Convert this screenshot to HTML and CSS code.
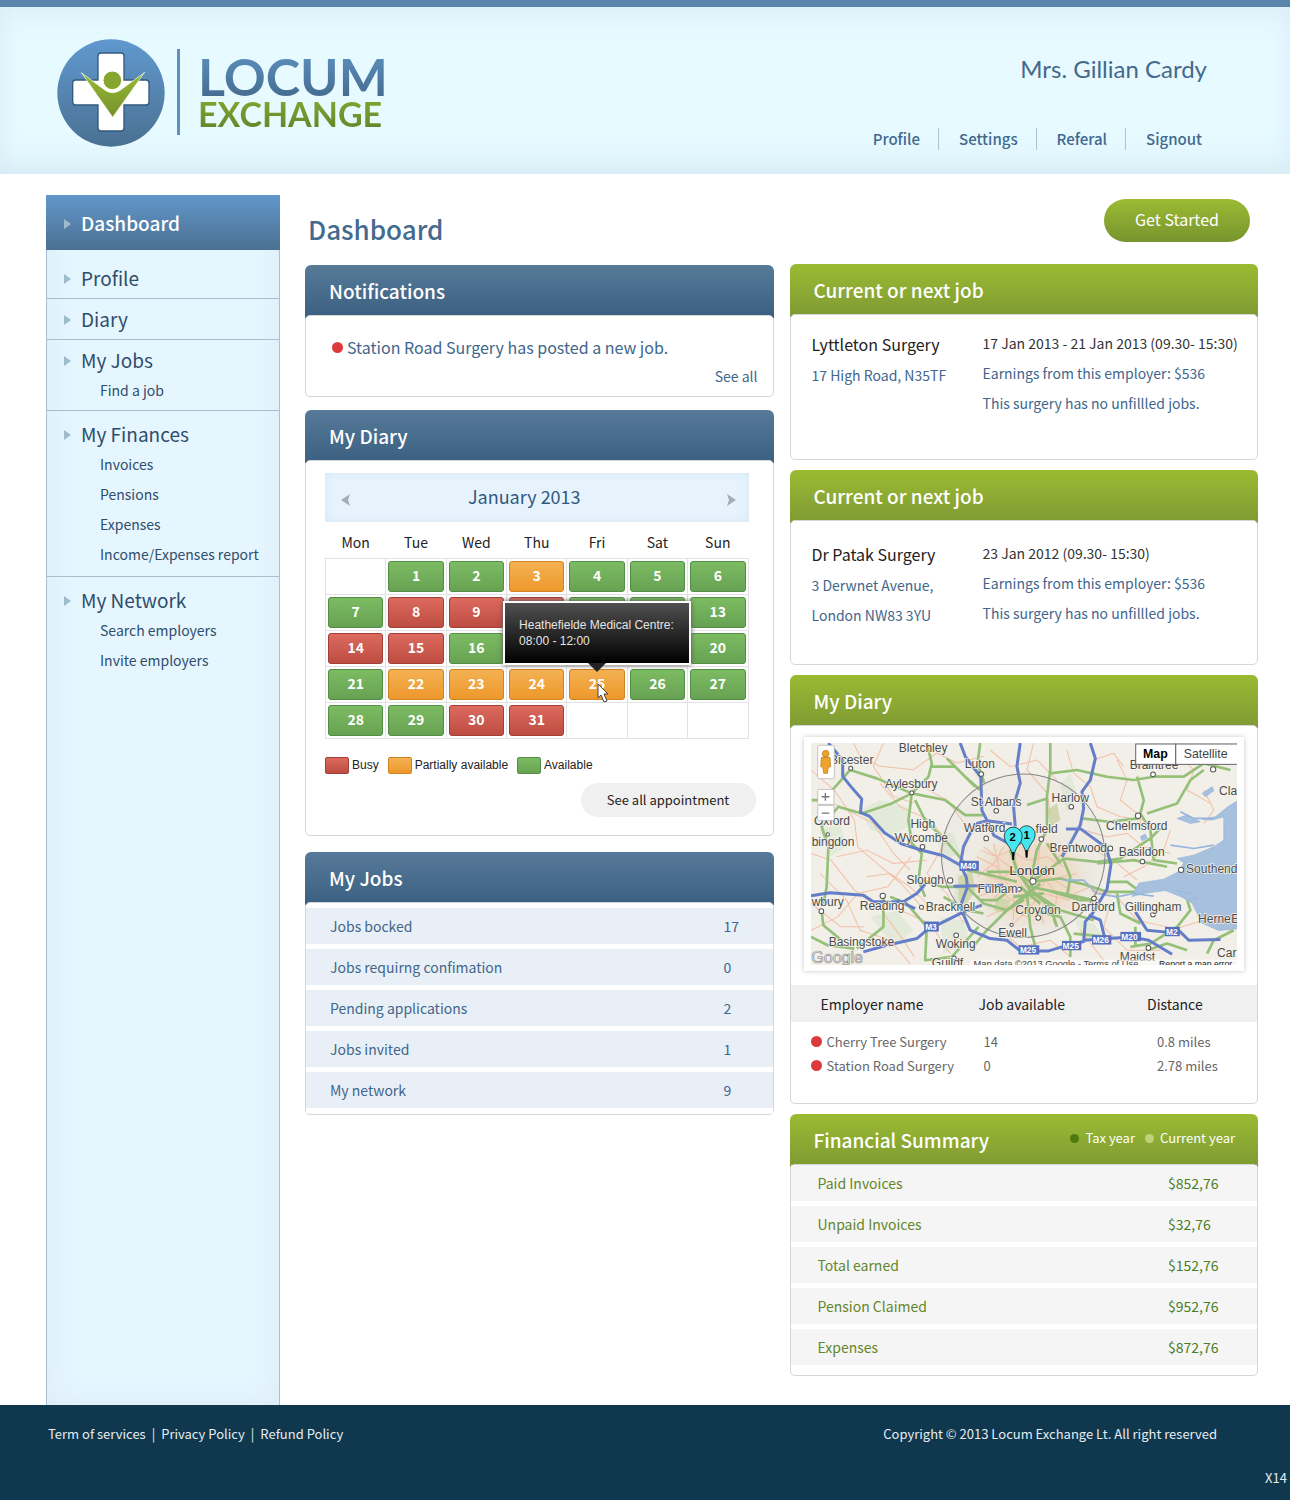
FILE: index.html
```html
<!DOCTYPE html>
<html lang="en">
<head>
<meta charset="utf-8">
<title>Locum Exchange - Dashboard</title>
<link rel="stylesheet" href="styles.css">
</head>
<body>
<header class="top">
  <a class="brand" href="#">
    <svg class="brand-mark" viewBox="0 0 324 324" width="108" height="108" aria-hidden="true">
      <defs>
        <linearGradient id="disc" x1="0" y1="0" x2="0" y2="1"><stop offset="0" stop-color="#6099cf"/><stop offset="1" stop-color="#4a7092"/></linearGradient>
        <linearGradient id="leaf" x1="0" y1="0" x2="0" y2="1"><stop offset="0" stop-color="#9aba32"/><stop offset="1" stop-color="#74922c"/></linearGradient>
      </defs>
      <circle cx="162" cy="162" r="161" fill="url(#disc)"/>
      <path d="M132 42h60q9 0 9 9v72h66q9 0 9 9v57q0 9-9 9h-66v69q0 9-9 9h-60q-9 0-9-9v-69H56q-9 0-9-9v-57q0-9 9-9h67V51q0-9 9-9z" fill="#fff" stroke="#34597b" stroke-width="4"/>
      <path d="M73 101l65 48q29 24 58 0l67-49-96 135z" fill="url(#leaf)" stroke="#fff" stroke-width="2"/>
      <circle cx="166" cy="124" r="28" fill="#86a62f" stroke="#fff" stroke-width="3"/>
    </svg>
    <span class="brand-text"><span class="brand-a">LOCUM</span><span class="brand-b">EXCHANGE</span></span>
  </a>
  <div class="account">
    <div class="user">Mrs. Gillian Cardy</div>
    <nav class="links"><a href="#">Profile</a><a href="#">Settings</a><a href="#">Referal</a><a href="#">Signout</a></nav>
  </div>
</header>

<div class="page">
  <nav class="side">
    <a class="side-active" href="#">Dashboard</a>
    <div class="group first"><a class="main" href="#">Profile</a></div>
    <div class="group"><a class="main" href="#">Diary</a></div>
    <div class="group"><a class="main" href="#">My Jobs</a><a class="sub" href="#">Find a job</a></div>
    <div class="group roomy"><a class="main" href="#">My Finances</a><a class="sub" href="#">Invoices</a><a class="sub" href="#">Pensions</a><a class="sub" href="#">Expenses</a><a class="sub" href="#">Income/Expenses report</a></div>
    <div class="group roomy last"><a class="main" href="#">My Network</a><a class="sub" href="#">Search employers</a><a class="sub" href="#">Invite employers</a></div>
  </nav>

  <main class="content">
    <div class="title-row"><h1>Dashboard</h1><button class="start" type="button">Get Started</button></div>
    <div class="columns">
      <div class="col col-left">
        <section class="card blue">
          <h2>Notifications</h2>
          <div class="body notes">
            <p class="note"><span class="dot"></span>Station Road Surgery has posted a new job.</p>
            <a class="see" href="#">See all</a>
          </div>
        </section>

        <section class="card blue">
          <h2>My Diary</h2>
          <div class="body diary">
            <div class="month">
              <button type="button" aria-label="Previous month"><svg width="9" height="12" viewBox="0 0 9 12"><path d="M9 0L0 6l9 6-2-6z" fill="#a3adb5"/></svg></button>
              <span>January 2013</span>
              <button type="button" aria-label="Next month"><svg width="9" height="12" viewBox="0 0 9 12"><path d="M0 0l9 6-9 6 2-6z" fill="#a3adb5"/></svg></button>
            </div>
            <table class="cal">
              <thead><tr><th>Mon</th><th>Tue</th><th>Wed</th><th>Thu</th><th>Fri</th><th>Sat</th><th>Sun</th></tr></thead>
              <tbody>
                <tr><td></td><td><button class="day free">1</button></td><td><button class="day free">2</button></td><td><button class="day part">3</button></td><td><button class="day free">4</button></td><td><button class="day free">5</button></td><td><button class="day free">6</button></td></tr>
                <tr><td><button class="day free">7</button></td><td><button class="day busy">8</button></td><td><button class="day busy">9</button></td><td><button class="day busy" aria-label="10"></button></td><td><button class="day free" aria-label="11"></button></td><td><button class="day free" aria-label="12"></button></td><td><button class="day free">13</button></td></tr>
                <tr><td><button class="day busy">14</button></td><td><button class="day busy">15</button></td><td><button class="day free">16</button></td><td><button class="day free" aria-label="17"></button></td><td><button class="day free" aria-label="18"></button></td><td><button class="day free" aria-label="19"></button></td><td><button class="day free">20</button></td></tr>
                <tr><td><button class="day free">21</button></td><td><button class="day part">22</button></td><td><button class="day part">23</button></td><td><button class="day part">24</button></td><td class="hovered"><button class="day part">25</button>
                  <div class="tip" role="tooltip">Heathefielde Medical Centre:<br>08:00 - 12:00</div>
                  <svg class="pointer" width="12" height="20" viewBox="0 0 12 20" aria-hidden="true"><path d="M1 1v14l3-3 3 7 3-1-3-7h4z" fill="#fff" stroke="#444" stroke-width="1"/></svg>
                </td><td><button class="day free">26</button></td><td><button class="day free">27</button></td></tr>
                <tr><td><button class="day free">28</button></td><td><button class="day free">29</button></td><td><button class="day busy">30</button></td><td><button class="day busy">31</button></td><td></td><td></td><td></td></tr>
              </tbody>
            </table>
            <div class="legend"><span><i class="swatch busy"></i>Busy</span><span><i class="swatch part"></i>Partially available</span><span><i class="swatch free"></i>Available</span></div>
            <button class="all" type="button">See all appointment</button>
          </div>
        </section>

        <section class="card blue jobs">
          <h2>My Jobs</h2>
          <div class="body">
            <table class="rows">
              <tr><th scope="row">Jobs bocked</th><td>17</td></tr>
              <tr><th scope="row">Jobs requirng confimation</th><td>0</td></tr>
              <tr><th scope="row">Pending applications</th><td>2</td></tr>
              <tr><th scope="row">Jobs invited</th><td>1</td></tr>
              <tr><th scope="row">My network</th><td>9</td></tr>
            </table>
          </div>
        </section>
      </div>

      <div class="col col-right">
        <section class="card green">
          <h2>Current or next job</h2>
          <div class="body job">
            <div><p class="place">Lyttleton Surgery</p><p>17 High Road, N35TF</p></div>
            <div><p class="when">17 Jan 2013 - 21 Jan 2013 (09.30- 15:30)</p><p>Earnings from this employer: $536</p><p>This surgery has no unfillled jobs.</p></div>
          </div>
        </section>
        <section class="card green">
          <h2>Current or next job</h2>
          <div class="body job lower">
            <div><p class="place">Dr Patak Surgery</p><p>3 Derwnet Avenue,</p><p>London NW83 3YU</p></div>
            <div><p class="when">23 Jan 2012 (09.30- 15:30)</p><p>Earnings from this employer: $536</p><p>This surgery has no unfillled jobs.</p></div>
          </div>
        </section>

        <section class="card green">
          <h2>My Diary</h2>
          <div class="body nearby">
            <div class="map-frame">
              <svg class="map" viewBox="0 0 1278 666" role="img" aria-label="Map of London and surroundings">
                <defs>
                  <radialGradient id="town"><stop offset="0" stop-color="#f0d9bd"/><stop offset=".6" stop-color="#f0e1cd"/><stop offset="1" stop-color="#f1eee6" stop-opacity="0"/></radialGradient>
                </defs>
                <rect width="1278" height="666" fill="#f1efe8"/>
                <g transform="translate(-33 -39)">
                  <g fill="#e4eada">
                    <path d="M180 240l60-30 80 20 20 50-70 40-60-20zM400 300l60 10 20 60-50 20zM210 560l80-20 50 60-60 50zM420 560l70 10 20 70-80 30zM60 300l60-20 20 70-50 30zM470 430l40 20-10 100-40-30zM780 160l30-30 20 60-30 60zM820 560l60 20 30 40-60 20zM500 90l60 40-20 30z"/>
                  </g>
                  <ellipse cx="690" cy="450" rx="215" ry="175" fill="url(#town)"/>
                  <g fill="#d3d9ac"><path d="M475 440l40-20 10 60-30 50-20-20zM740 240l30-20 10 50-30 20zM590 500l40 10-10 40-40-10z"/></g>
                  <g fill="none" stroke="#f4bfa6" stroke-width="3" stroke-linejoin="round">
                    <path d="M160 39l20 40 60 30 100 10 70-50 60 30 80-20M33 120l70 60 60 90 10 80 70 60 60 50 70 80M33 370l60 20 70 90 80 60 60 80 40 60M100 220l120 60 60 90 50 50M240 160l60 70 90 40 70 90M33 600l80-40 60-70 90-20 70-90M250 39l-30 70 60 90 60 20M60 430l80 80 40 90 90 30 60 70M300 540l90 40 60 90M350 160l90 50 60 80M570 60l60 50 80-20 60 60M440 330l-60 100 60 60 50 90M33 520l90 70 70 0M110 380l90-20 80 40 100-10M200 440l70-10 60 40 50 50 60 10"/>
                    <path d="M700 39l-20 80 60 70 10 60M800 60l20 70 50 40 20 60 70 30 70 10M950 90l30 60-20 60 50 40 20 50M850 300l70 20 60-10 50 40 80 20M1120 60l60 60-20 60 70 40M1110 300l-20 60-60 50-60 30M870 480l80 20 60 70 90 20 70 40M930 520l-20 70 70 70 100 0M1110 600l100-30 80 30M840 600l70 90M600 600l60 50 90-20 60 50M1210 180l30 60-30 40M880 90l60-20 30 40M880 360l60 30 70 60"/>
                    <path d="M540 360l50 20 40-20 50 30 60-10 50 30M520 420l70 30 60-30 90 30 90-20M530 500l60-20 60 40 80-30 80 20M560 560l60-30 60 30 60-40M580 340l20 90 40 60 0 80M640 330l10 90 60 70 20 90M720 340l-10 80 60 70-10 90M790 360l-50 80-40 80-60 60M550 350l80 60 100 20 80 50M610 350l-30 50-50 40M530 380l60 30 20 60-40 50M820 450l50 20 30 50M800 500l70-30 50 20"/>
                  </g>
                  <g fill="none" stroke="#95c078" stroke-width="8" stroke-linejoin="round">
                    <path d="M150 120l80 25 105 45 50-50 10-40-15-61M150 120l-80 90-35 0M335 190l-60 30-90 30-70-20-50 60 20 60-5 120-10 50M335 190l100 20 60 45 60 0M335 190l-10 80 10 70 30 30-10 80 20 50M345 210l30 60 60 60 60 70M395 110l70 0 60 60M440 85l60 60 40 35M250 500l0 90-80 65M270 500l50 20 60 70-5 100 80-10 80-90M65 545l5 40 60 50M500 420l70 15 80 20M540 39l-8 60 20 60M33 620l50 25 80 10M500 470l50 50 70 20 50-30M365 450l60 20 70 0M430 500l70 40 50 10"/>
                    <path d="M750 39l0 80 -10 80 0 100-30 60-20 100M750 130l80-10 90 20 80 10 60-10 90 0 60-40 80 20M740 205l-60 20M1010 140l20 70-10 40 30 50 10 90 70 10M1040 250l90-30 40-70 40-30M845 265l80 10 90-10M690 455l60-40 40-30 100 10 70-10 90-60 30-30M890 400l110-10 100 20M690 455l90-10 80 20 60 20 100 0-40-30-60 0M690 470l100 20 90 20M690 480l-70 60-60 60-50 60M680 490l10 100 20 80M690 480l90 60 100 30M880 510l-40 0-100-30M700 540l80 20 30 60 0 60M950 490l10 60 60 30M1160 510l10 30-40 50-80 50-60 10M1300 600l-60 30-20 40M1005 590l0 60M640 470l-50 40-50 0M690 455l-50-30-80 0M780 400l-40-60M790 390l20 50-10 60M920 620l-100-10M1040 660l60-20 60 20"/>
                    <path d="M690 480l-40-60-20-60M690 480l60 50 20 60M650 520l70-60M660 470l60 50M640 500l90-10M690 470l50-60" stroke-width="9"/>
                  </g>
                  <g fill="#a7c0dd" stroke="#93b4da" stroke-width="2">
                    <path d="M1315 210l-30 18-40 32-40 8 30 2 35-10 0 70-30 20-60 25-50 10 20 12-10 25-50 25-75 12-20 40 40-10 60-8 50 20 30 18 30 60 50 22 60-6z"/>
                    <path d="M1130 265l30-10 40 20-30 5zM1205 190l30-20 5 12-25 18zM1020 320l15-8 5 12-15 8zM1130 480l40 10 20 15-30 5z"/>
                  </g>
                  <path d="M790 450l60 0 40 40 60 10 50-10 60 8M1240 265l-60 0-40-20M1240 345l-60 10-70-10" fill="none" stroke="#94b6dc" stroke-width="5"/>
                  <g fill="none" stroke="#647dc8" stroke-width="9" stroke-linejoin="round">
                    <path d="M85 39l25 30 18 22 0 48 24 30 33 38-4 40 28 12 45 50 50 32 56 18 70 18 50 28 18 35 4 30-22 60 30 70 60 25 50 5 40 32 85 0 50-15 55-13 5-60 20-22 45-75 12-75-15-50-75-55-45 0M480 405l10-55 20-40 20-30 30-8 75 10M480 39l16 42 46 60 3 100 18 35 18 40 40 22 40 2M660 39l-10 70 10 50-20 70 5 60M870 39l15 46-15 65-25 35 5 50-10 50-30 55-25 40M33 497l57-9 100 7 30 20 90 0 40-25 25-28M290 510l55 25M460 468l150-3M190 665l70-20 90-20 30-25 50-25 60-30 55-20M1005 545l35 55 50 5 45-5 30 30 95-2M850 630l140-10 55 10 70 42M865 555l35 15 15 60"/>
                  </g>
                  <circle cx="669" cy="377" r="245" fill="#bbb" fill-opacity=".07" stroke="#858585" stroke-width="3"/>
                  <g class="shield"><rect x="478" y="392" width="58" height="30"/><rect x="372" y="574" width="44" height="30"/><rect x="655" y="645" width="62" height="28"/><rect x="785" y="632" width="58" height="28"/><rect x="875" y="615" width="58" height="28"/><rect x="960" y="605" width="62" height="28"/><rect x="1094" y="590" width="44" height="28"/>
                    <text x="480" y="416">M40</text><text x="375" y="598">M3</text><text x="659" y="668">M25</text><text x="787" y="655">M25</text><text x="877" y="638">M26</text><text x="963" y="628">M20</text><text x="1097" y="613">M2</text></g>
                  <g fill="#fff" stroke="#555" stroke-width="3"><circle cx="152" cy="115" r="6"/><circle cx="335" cy="188" r="6"/><circle cx="543" cy="132" r="7"/><circle cx="588" cy="242" r="7"/><circle cx="558" cy="325" r="7"/><circle cx="367" cy="350" r="7"/><circle cx="83" cy="313" r="5"/><circle cx="450" cy="451" r="8"/><circle cx="248" cy="497" r="8"/><circle cx="364" cy="531" r="6"/><circle cx="64" cy="543" r="7"/><circle cx="468" cy="615" r="7"/><circle cx="462" cy="683" r="6"/><circle cx="657" cy="477" r="6"/><circle cx="634" cy="584" r="5"/><circle cx="698" cy="453" r="9"/><circle cx="813" cy="230" r="7"/><circle cx="723" cy="327" r="7"/><circle cx="930" cy="355" r="7"/><circle cx="1058" cy="133" r="7"/><circle cx="1238" cy="118" r="8"/><circle cx="1013" cy="257" r="8"/><circle cx="1026" cy="394" r="7"/><circle cx="1142" cy="419" r="8"/><circle cx="881" cy="505" r="7"/><circle cx="714" cy="563" r="7"/><circle cx="1058" cy="553" r="7"/><circle cx="1044" cy="653" r="7"/></g>
                  <g class="towns">
                    <text x="296" y="66">Bletchley</text><text x="90" y="103">Bicester</text><text x="494" y="115">Luton</text><text x="255" y="174">Aylesbury</text><text x="512" y="228">St Albans</text><text x="42" y="284">Oxford</text><text x="331" y="294">High</text><text x="284" y="335">Wycombe</text><text x="491" y="307">Watford</text><text x="35" y="348">bingdon</text><text x="319" y="462">Slough</text><text x="35" y="528">wbury</text><text x="179" y="538">Reading</text><text x="377" y="541">Bracknell</text><text x="86" y="647">Basingstoke</text><text x="407" y="653">Woking</text><text x="594" y="619">Ewell</text><text x="395" y="711">Guildf</text><text x="532" y="487">Fulham</text>
                    <text x="754" y="215">Harlow</text><text x="706" y="310">field</text><text x="748" y="366">Brentwood</text><text x="988" y="118">Braintree</text><text x="917" y="300">Chelmsford</text><text x="955" y="378">Basildon</text><text x="1157" y="430">Southend</text><text x="1256" y="195">Cla</text><text x="645" y="551">Croydon</text><text x="814" y="542">Dartford</text><text x="973" y="542">Gillingham</text><text x="1193" y="579">Herne</text><text x="1292" y="579">E</text><text x="958" y="693">Maidst</text><text x="1250" y="680">Car</text><text class="city" x="627" y="434">London</text>
                  </g>
                  <text class="google" x="34" y="697">Google</text>
                  <rect x="510" y="688" width="801" height="20" fill="#fff" fill-opacity=".6"/>
                  <text class="credit" x="520" y="711">Map data ©2013 Google - Terms of Use</text><text class="credit credit-strong" x="1076" y="711">Report a map error</text>
                  <g stroke="#000" stroke-width="2" fill="#45e6ef"><path d="M679 382q-2-26-16-44-10-12-10-24a26 27 0 0 1 52 0q0 12-10 24-14 18-16 44z"/><path d="M639 389q-2-26-16-44-11-12-11-26a27 28 0 0 1 54 0q0 14-11 26-14 18-16 44z"/></g>
                  <path d="M679 360v22M639 366v23" stroke="#000" stroke-width="6"/>
                  <g class="pin"><text x="670" y="328">1</text><text x="628" y="334">2</text></g>
                  <g fill="#fff" stroke="#aaa" stroke-width="2"><rect x="53" y="46" width="50" height="100" rx="5"/><rect x="53" y="178" width="49" height="45" rx="3"/><rect x="53" y="226" width="49" height="45" rx="3"/></g>
                  <path d="M65 200h23M76 189v23M65 249h23" stroke="#777" stroke-width="4"/>
                  <g fill="#eda32b" stroke="#b87414" stroke-width="2"><path d="M64 82h26l2 28-7 2-3 18H71l-3-18-6-2z"/><circle cx="77" cy="71" r="10"/></g>
                  <g fill="#fff" stroke="#666" stroke-width="3"><rect x="1006" y="42" width="120" height="61"/><rect x="1126" y="42" width="190" height="61"/></g>
                  <text class="map-on" x="1028" y="85">Map</text><text class="map-off" x="1150" y="85">Satellite</text>
                </g>
              </svg>
            </div>
            <table class="employers">
              <thead><tr><th>Employer name</th><th>Job available</th><th>Distance</th></tr></thead>
              <tbody>
                <tr><td><span class="dot"></span>Cherry Tree Surgery</td><td>14</td><td>0.8 miles</td></tr>
                <tr><td><span class="dot"></span>Station Road Surgery</td><td>0</td><td>2.78 miles</td></tr>
              </tbody>
            </table>
          </div>
        </section>

        <section class="card green finance">
          <div class="head"><h2>Financial Summary</h2><p class="years"><span class="tax">Tax year</span><span class="current">Current year</span></p></div>
          <div class="body">
            <table class="rows">
              <tr><th scope="row">Paid Invoices</th><td>$852,76</td></tr>
              <tr><th scope="row">Unpaid Invoices</th><td>$32,76</td></tr>
              <tr><th scope="row">Total earned</th><td>$152,76</td></tr>
              <tr><th scope="row">Pension Claimed</th><td>$952,76</td></tr>
              <tr><th scope="row">Expenses</th><td>$872,76</td></tr>
            </table>
          </div>
        </section>
      </div>
    </div>
  </main>
</div>

<footer class="foot">
  <div class="foot-row">
    <nav class="terms"><a href="#">Term of services</a><span>|</span><a href="#">Privacy Policy</a><span>|</span><a href="#">Refund Policy</a></nav>
    <p>Copyright © 2013 Locum Exchange Lt. All right reserved</p>
  </div>
  <p class="code">X14</p>
</footer>
</body>
</html>
```
FILE: styles.css
```css
* { box-sizing: border-box; }
body { margin: 0; background: #fff; color: #41668c; font: 14px/30px "Noto Sans CJK SC", "Open Sans", sans-serif; }
a { color: inherit; text-decoration: none; }
p, h1, h2 { margin: 0; }
button { font: inherit; color: inherit; border: 0; background: none; padding: 0; cursor: pointer; }
table { border-collapse: collapse; width: 100%; }
th { font-weight: 400; text-align: left; }
th, td { padding: 0; }

/* Header */
.top { display: flex; justify-content: space-between; height: 174px; padding: 32px 83px 0 57px; border-top: 7px solid #5a84aa; background: #e6faff; box-shadow: inset 0 -24px 36px -18px #d6eaf4, inset 0 18px 36px -18px #dcebf5, inset 0 0 24px #e0f2fa; }
.brand { display: flex; align-items: flex-start; }
.brand-mark { flex: none; }
.brand-text { display: flex; flex-direction: column; margin: 10px 0 0 12px; padding: 4px 0 0 18px; height: 86px; border-left: 3px solid #5f8fc0; font-family: Lato, sans-serif; font-weight: 700; }
.brand-a { font-size: 52px; line-height: 46px; background: linear-gradient(#5c8fbd, #456b8e); background-clip: text; -webkit-background-clip: text; color: transparent; }
.brand-b { font-size: 34px; line-height: 30px; background: linear-gradient(#84a431, #64862a); background-clip: text; -webkit-background-clip: text; color: transparent; }
.account { display: flex; flex-direction: column; align-items: flex-end; padding-top: 15px; }
.user { font-family: Lato, sans-serif; font-size: 24px; color: #45698c; }
.links { display: flex; margin-top: 44px; font-size: 15px; line-height: 22px; font-weight: 500; color: #41698f; }
.links a { padding: 0 18px 0 20px; border-left: 1px solid #a9c4d3; }
.links a:first-child { border: 0; }
.links a:last-child { padding-right: 5px; }

/* Page */
.page { display: grid; grid-template-columns: 234px minmax(0, 1fr); gap: 25px; padding: 21px 32px 0 46px; }
.content { padding-bottom: 29px; }
.columns { display: grid; grid-template-columns: repeat(2, minmax(0, 1fr)); gap: 16px; }
.title-row { display: flex; justify-content: space-between; align-items: flex-start; height: 69px; padding: 4px 8px 0 3px; }
h1 { font-size: 26px; line-height: 60px; font-weight: 500; color: #446a8e; }
.start { width: 146px; height: 43px; padding-bottom: 3px; border-radius: 22px; font-size: 16px; color: #fff; background: linear-gradient(#9cbb33, #77942f); }

/* Side menu */
.side { border: 1px solid #a9c0d6; border-bottom: 0; background: #e5f6ff; box-shadow: inset 0 0 30px #dceaf5; color: #2f4d6c; }
.side a { display: block; }
.side-active { margin: -1px; padding-left: 35px; font-size: 19px; line-height: 55px; font-weight: 500; color: #fff; background: linear-gradient(#6297cb, #4b7091); }
.group { padding: 5px 0; border-bottom: 1px solid #a9bfd0; }
.first { padding-top: 14px; }
.roomy { padding: 8px 0 7px; }
.last { border: 0; }
.main { padding-left: 34px; font-size: 19px; }
.main::before, .side-active::before { content: ""; display: inline-block; width: 0; height: 0; margin: 0 10px 2px -17px; border: solid transparent; border-width: 5px 0 5px 7px; border-left-color: #9fbccd; }
.sub { padding-left: 53px; }

/* Cards */
.col { display: flex; flex-direction: column; }
.col-left { gap: 13px; padding-top: 1px; }
.col-right { gap: 10px; }
.card h2, .head { height: 53px; padding-left: 24px; border-radius: 6px 6px 0 0; font-size: 19px; line-height: 51px; font-weight: 500; color: #fff; }
.head h2 { padding: 0; background: none; }
.blue h2 { background: linear-gradient(#577a99, #3a5f80); }
.green > h2, .head { background: linear-gradient(#9bbb32, #7e9a34); }
.body { margin-top: -3px; border: 1px solid #d3d7da; border-radius: 5px; background: #fff; }
.dot { display: inline-block; flex: none; width: 11px; height: 11px; border-radius: 50%; background: #dc3a3c; }
.notes { padding: 16px 15px 6px 26px; }
.note { display: flex; align-items: center; gap: 4px; font-size: 16px; }
.see { display: block; line-height: 28px; text-align: right; }

/* Diary */
.diary { padding: 12px 24px 18px 19px; }
.month { display: flex; justify-content: space-between; align-items: center; height: 49px; padding: 0 13px 0 16px; font-size: 18px; color: #33587d; background: #e6f3fd; box-shadow: inset 0 0 8px #d6e6f2; }
.month span { margin-right: 28px; padding-bottom: 4px; }
.cal { table-layout: fixed; margin-top: 5px; }
.cal th { height: 31px; line-height: 31px; text-align: center; color: #222; }
.cal td { position: relative; height: 36px; padding: 2px; border: 1px solid #e2e2e2; }
.day { display: block; width: 100%; height: 31px; padding-bottom: 2px; border-radius: 3px; font-size: 14px; line-height: 27px; font-weight: 700; color: #fff; }
.free { border: 1px solid #528f45; background: linear-gradient(#7cbb63, #67a252); }
.busy { border: 1px solid #a33f36; background: linear-gradient(#dc6a5f, #bd4c41); }
.part { border: 1px solid #d08424; background: linear-gradient(#f3b152, #ee982c); }
.tip { position: absolute; z-index: 2; left: 50%; bottom: 37px; width: 188px; height: 64px; margin-left: -94px; padding: 14px 14px 0; border: 2px solid #fff; background: linear-gradient(#505050, #000); background-clip: padding-box; box-shadow: 0 0 5px #555; font: 12px/16px "Liberation Sans", sans-serif; color: #e4e4e4; white-space: nowrap; }
.tip::after { content: ""; position: absolute; left: 83px; top: 60px; border: solid transparent; border-width: 9px 9px 0; border-top-color: #222; }
.pointer { position: absolute; z-index: 3; left: 30px; top: 16px; }
.legend { display: flex; gap: 9px; margin-top: 18px; font: 12px/17px "Liberation Sans", sans-serif; color: #222; }
.legend span { display: flex; gap: 3px; }
.swatch { width: 24px; height: 17px; border-radius: 2px; }
.all { display: block; width: 175px; height: 34px; margin: 9px -7px 0 auto; border-radius: 17px; background: #f0f0f0; font-size: 13px; color: #222; }

/* Striped rows */
.rows { border-collapse: separate; border-spacing: 0; }
.rows th, .rows td { height: 41px; border-bottom: 5px solid #fff; background: #e9eff6; background-clip: padding-box; line-height: 34px; }
.rows th { padding-left: 24px; }
.jobs { margin-top: 3px; }
.jobs .body { padding: 5px 0 1px; }
.jobs td { width: 49px; }
.finance .body { padding: 0 0 5px; }
.finance .rows th, .finance .rows td { background-color: #f5f5f5; color: #64862a; }
.finance .rows th { padding-left: 27px; }
.finance .rows td { width: 89px; color: #4c7d1c; }
.head { display: flex; justify-content: space-between; padding-right: 23px; }
.years { display: flex; gap: 10px; font-size: 13px; font-weight: 400; line-height: 48px; }
.years span::before { content: ""; display: inline-block; width: 9px; height: 9px; margin-right: 6px; border-radius: 50%; background: #4d7a0c; }
.years .current::before { background: #bfd278; }

/* Jobs and map */
.job { display: grid; grid-template-columns: 171px minmax(0, 1fr); min-height: 146px; padding: 13px 0 0 21px; white-space: nowrap; }
.lower { min-height: 145px; padding-top: 17px; }
.place { font-size: 16px; line-height: 32px; color: #222; }
.when { color: #333; }
.nearby { padding: 11px 0 25px; }
.map-frame { margin: 0 13px 14px; padding: 6px 7px; box-shadow: 0 0 5px #c8c8c8; }
.map { display: block; width: 100%; font-family: "Liberation Sans", sans-serif; }
.towns { font-size: 36px; fill: #4a4a4a; stroke: #f6f4ee; stroke-width: 4px; paint-order: stroke; }
.towns .city { font-size: 41px; fill: #333; }
.shield rect { fill: #5670bf; }
.shield text { font-size: 25px; font-weight: 700; fill: #fff; }
.google { font-size: 48px; fill: #fff; fill-opacity: .6; stroke: #888; stroke-width: 2px; }
.credit { font-size: 28px; fill: #444; }
.credit-strong { font-size: 26px; fill: #222; }
.pin { font-size: 34px; font-weight: 700; }
.map-on { font-size: 37px; font-weight: 700; }
.map-off { font-size: 37px; fill: #444; }
.employers { table-layout: fixed; }
.employers th { height: 37px; background: #f0f0f0; color: #222; }
.employers th:first-child { width: 188px; padding-left: 30px; }
.employers th:last-child { width: 110px; }
.employers td { height: 24px; font-size: 13px; line-height: 24px; color: #666; }
.employers td:first-child { padding-left: 20px; }
.employers td:nth-child(2) { padding-left: 5px; }
.employers td:last-child { padding-left: 10px; }
.employers .dot { margin-right: 5px; }
.employers tbody::before { content: ""; display: block; height: 8px; }

/* Footer */
.foot { min-height: 96px; padding: 14px 3px 0 48px; background: #0f374e; color: #e6edf1; font-size: 13px; }
.foot-row { display: flex; justify-content: space-between; padding-right: 70px; }
.terms { display: flex; gap: 6px; }
.code { margin-top: 14px; text-align: right; }
```
